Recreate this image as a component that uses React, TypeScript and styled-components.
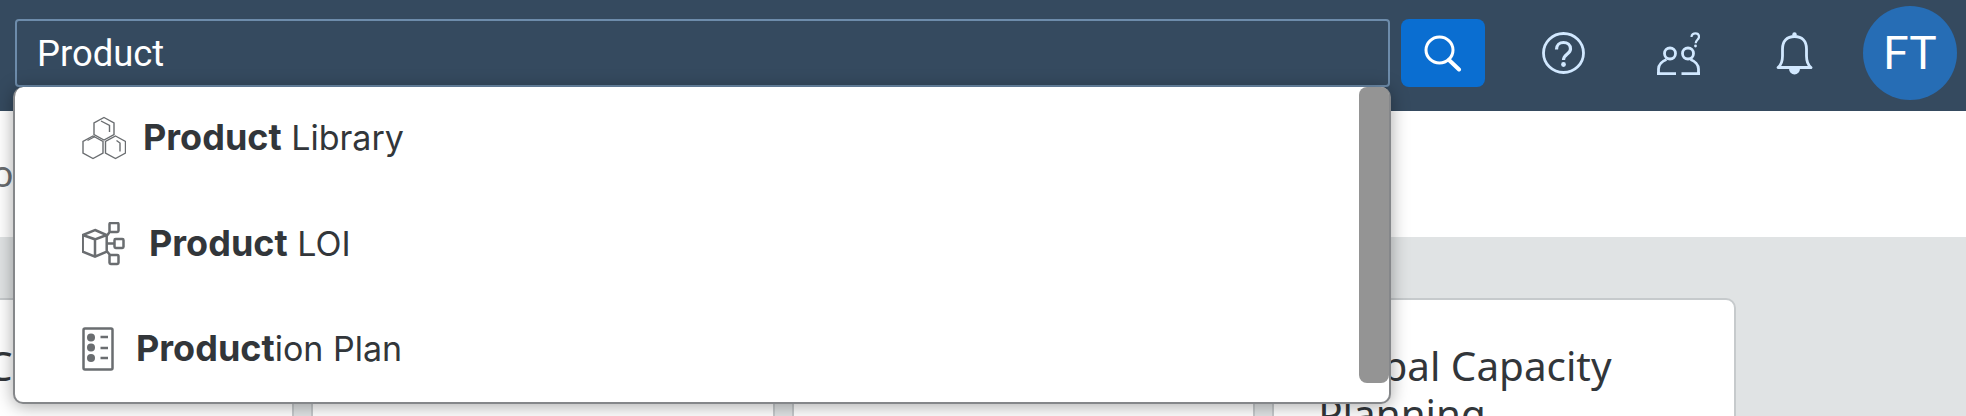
import React from 'react';
import styled, { createGlobalStyle } from 'styled-components';

const GlobalStyle = createGlobalStyle`
  html, body {
    margin: 0;
    padding: 0;
    width: 1966px;
    height: 416px;
    overflow: hidden;
    background: #ffffff;
    font-family: Inter, "Noto Sans", Arial, sans-serif;
  }
`;

const Page = styled.div`
  position: relative;
  display: flex;
  flex-direction: column;
  width: 1966px;
  height: 416px;
  overflow: hidden;
`;

const Header = styled.header`
  flex: none;
  display: flex;
  align-items: flex-start;
  height: 111px;
  padding: 6px 0 0 15px;
  box-sizing: border-box;
  background: #354a5f;
`;

const SearchField = styled.div`
  display: flex;
  align-items: center;
  box-sizing: border-box;
  width: 1375px;
  height: 68px;
  margin-top: 13px;
  padding-left: 20px;
  border: 2px solid #6d8cab;
  border-radius: 4px;
  color: #ffffff;
  font-family: Roboto, sans-serif;
  font-size: 36.4px;
`;

const SearchButton = styled.div`
  display: flex;
  align-items: center;
  justify-content: center;
  width: 84px;
  height: 68px;
  margin: 13px 0 0 11px;
  border-radius: 8px;
  background: #0a6ed1;
`;

const ActionIcon = styled.div<{ $ml: number }>`
  margin: 26px 0 0 ${p => p.$ml}px;
  svg {
    display: block;
    fill: none;
    stroke: #d1e8ff;
    stroke-width: 2.8;
  }
`;

const Avatar = styled.div`
  display: flex;
  align-items: center;
  justify-content: center;
  width: 94px;
  height: 94px;
  margin-left: 50px;
  border-radius: 50%;
  background: #266db5;
  color: #ffffff;
  font-family: Roboto, sans-serif;
  font-size: 46px;
`;

const SubBar = styled.div`
  flex: none;
  display: flex;
  align-items: center;
  height: 126px;
  padding-bottom: 2px;
  box-sizing: border-box;
  background: #ffffff;
  color: #6a6d70;
  font-family: "Noto Sans", sans-serif;
  font-size: 36px;
`;

const SubBarLabel = styled.span`
  margin-left: -35px;
`;

const Content = styled.main`
  flex: 1;
  min-height: 0;
  display: flex;
  gap: 17px;
  padding-top: 61px;
  margin-left: -169px;
  width: 2135px;
  box-sizing: border-box;
  background: #e0e3e4;
`;

const Card = styled.section`
  flex: none;
  box-sizing: border-box;
  width: 463.4px;
  height: 300px;
  padding: 42px 44px 0;
  background: #ffffff;
  border: 2px solid #c6cacc;
  border-radius: 10px;
  color: #32363a;
  font-family: "Noto Sans", sans-serif;
  font-size: 40.4px;
  line-height: 48px;
`;

const Dropdown = styled.div`
  position: absolute;
  left: 13px;
  top: 87px;
  display: flex;
  flex-direction: column;
  box-sizing: border-box;
  width: 1378px;
  height: 317px;
  background: #ffffff;
  border: 2px solid #85878a;
  border-top: none;
  border-radius: 10px;
  box-shadow: 0 2px 18px rgba(0, 0, 0, 0.35);
`;

const Option = styled.div<{ $gap: number }>`
  flex: none;
  display: flex;
  align-items: center;
  gap: ${p => p.$gap}px;
  box-sizing: border-box;
  height: 105.5px;
  padding: 0 0 3px 67px;
  color: #32363a;
  font-size: 34px;
  svg {
    flex: none;
    display: block;
    fill: none;
    stroke: #6a6d70;
  }
  span {
    margin-bottom: 2px;
  }
  b {
    font-size: 36px;
    font-weight: 700;
  }
`;

const ScrollThumb = styled.div`
  position: absolute;
  top: 0;
  right: 0;
  width: 30px;
  height: 296px;
  background: #949494;
  border-radius: 8px;
`;

const App: React.FC = () => (
  <Page>
    <GlobalStyle />
    <Header>
      <SearchField>Product</SearchField>
      <SearchButton>
        <svg width="38" height="37" viewBox="0 0 38 37" fill="none" stroke="#fff" strokeLinecap="round">
          <ellipse cx="15.5" cy="15" rx="13.5" ry="13" strokeWidth="3" />
          <path d="M25 25 L35 34.5" strokeWidth="4" />
        </svg>
      </SearchButton>
      <ActionIcon $ml={57}>
        <svg width="43" height="42" viewBox="0 0 43 42">
          <ellipse cx="21.5" cy="21" rx="20" ry="19.5" />
          <path d="M14.5 17.5c0-4.5 3-7 7-7s7 2.5 7 6.5c0 5-7 5-7 11" strokeWidth="3.2" />
          <circle cx="21.5" cy="32.5" r="2.4" fill="#d1e8ff" stroke="none" />
        </svg>
      </ActionIcon>
      <ActionIcon $ml={72}>
        <svg width="43" height="43" viewBox="0 0 43 43">
          <circle cx="13" cy="21.5" r="5.5" />
          <circle cx="31" cy="21.5" r="5.5" />
          <path d="M1.5 43v-6c0-4.5 4-8 8-9.5M0 41.7h19M41.5 43v-6c0-4.5-4-8-8-9.5M24.5 41.7H43" />
          <path d="M34.5 5c0-2.5 2-3.7 4-3.7s3.5 1.5 3.5 3.5c0 3-3.3 3-3.3 6.5" strokeWidth="2.2" />
          <circle cx="38.5" cy="14" r="1.4" fill="#d1e8ff" stroke="none" />
        </svg>
      </ActionIcon>
      <ActionIcon $ml={76}>
        <svg width="37" height="43" viewBox="0 0 37 43">
          <path d="M2 35.5C5 33 6.5 29 6.5 24V17C6.5 9 11 4.5 18.5 4.5S30.5 9 30.5 17V24C30.5 29 32 33 35 35.5Z" strokeLinejoin="round" />
          <circle cx="18.5" cy="2.5" r="2.2" fill="#d1e8ff" stroke="none" />
          <path d="M13 36.5a5.5 6 0 0 0 11 0z" fill="#d1e8ff" stroke="none" />
        </svg>
      </ActionIcon>
      <Avatar>FT</Avatar>
    </Header>
    <SubBar>
      <SubBarLabel>Home</SubBarLabel>
    </SubBar>
    <Content>
      <Card>Work Capacity</Card>
      <Card>Demand</Card>
      <Card>Supply</Card>
      <Card>Global Capacity Planning</Card>
    </Content>
    <Dropdown>
      <Option $gap={17}>
        <svg width="44" height="44" viewBox="0 0 44 44" strokeWidth="1.4">
          <path d="M22 1.5l10 5.5v11.5l-10 5.5-10-5.5V7z" />
          <path d="M19 5l8.5 4.5v6.5" />
          <path d="M11 20l10 5.5V37l-10 5.5L1 37V25.5z" />
          <path d="M5.5 24.5L13 20.5" />
          <path d="M33.5 20l10 5.5V37l-10 5.5-10-5.5V25.5z" />
          <path d="M34.5 24.5l3.5 2.5v8.5" />
        </svg>
        <span><b>Product</b> Library</span>
      </Option>
      <Option $gap={23}>
        <svg width="44" height="44" viewBox="0 0 44 44" strokeWidth="2.5">
          <path d="M13 8l11.7 5v16.7L13 34.7.7 29.7V13zM.7 13L13 17.3 24.7 13M13 17.3v17.4" />
          <path d="M24.7 14L28 9.5M24.7 21.5H32M24.7 29L28 33" />
          <rect x="27.5" y="1" width="9" height="9" rx="1.2" />
          <rect x="32.5" y="17" width="9" height="9" rx="1.2" />
          <rect x="27.5" y="33" width="9" height="9" rx="1.2" />
        </svg>
        <span><b>Product</b> LOI</span>
      </Option>
      <Option $gap={22}>
        <svg width="32" height="44" viewBox="0 0 32 44" strokeWidth="2.5">
          <rect x="1.5" y="1.5" width="29" height="41" rx="1.5" />
          <circle cx="9" cy="10.5" r="4" fill="#6a6d70" stroke="none" />
          <circle cx="9" cy="20.5" r="4" fill="#6a6d70" stroke="none" />
          <circle cx="9" cy="31" r="4" fill="#6a6d70" stroke="none" />
          <path d="M18.5 10h7.5M18.5 21h7.5M18.5 31h7.5" />
        </svg>
        <span><b>Product</b>ion Plan</span>
      </Option>
      <ScrollThumb />
    </Dropdown>
  </Page>
);

export default App;
